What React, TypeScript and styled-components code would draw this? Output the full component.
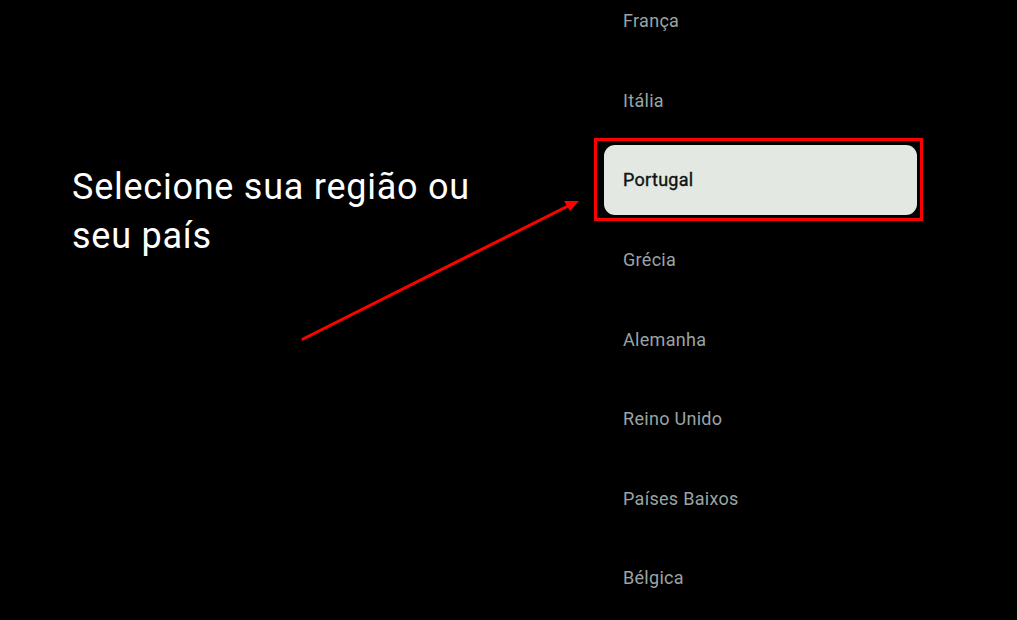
import React from "react";
import styled, { createGlobalStyle } from "styled-components";

const GlobalStyle = createGlobalStyle`
  html, body {
    margin: 0;
    padding: 0;
    background: #000;
  }
  body {
    font-family: Roboto, "Noto Sans", sans-serif;
  }
`;

const Screen = styled.div`
  position: relative;
  width: 1017px;
  height: 620px;
  overflow: hidden;
  background: #000;
  display: grid;
  grid-template-columns: 604px 313px 1fr;
`;

const Intro = styled.div`
  padding: 163px 0 0 72px;
`;

const Title = styled.h1`
  margin: 0;
  width: 430px;
  font-weight: 400;
  font-size: 36px;
  letter-spacing: 0.75px;
  line-height: 49px;
  color: #fff;
`;

const List = styled.ul`
  list-style: none;
  margin: -19px 0 0;
  padding: 0;
  display: flex;
  flex-direction: column;
`;

const Row = styled.li`
  height: 79.6px;
  display: flex;
  align-items: center;
`;

const Item = styled.div<{ $selected?: boolean }>`
  flex: 1;
  height: 70px;
  display: flex;
  align-items: center;
  padding-left: 19px;
  border-radius: 11px;
  font-size: 18px;
  letter-spacing: 0.3px;
  font-weight: 400;
  -webkit-text-stroke: ${(p) => (p.$selected ? "0.4px #101412" : "0")};
  color: ${(p) => (p.$selected ? "#101412" : "#9aa4a5")};
  background: ${(p) => (p.$selected ? "#e3e8e2" : "transparent")};
`;

const Highlight = styled.div`
  position: absolute;
  left: 594px;
  top: 138px;
  width: 323px;
  height: 77px;
  border: 3px solid #ff0000;
`;

const Arrow = styled.svg`
  position: absolute;
  inset: 0;
  pointer-events: none;
`;

const countries = [
  "França",
  "Itália",
  "Portugal",
  "Grécia",
  "Alemanha",
  "Reino Unido",
  "Países Baixos",
  "Bélgica",
];

export default function App() {
  return (
    <>
      <GlobalStyle />
      <Screen>
        <Intro>
          <Title>Selecione sua região ou seu país</Title>
        </Intro>
        <List>
          {countries.map((c) => (
            <Row key={c}>
              <Item $selected={c === "Portugal"}>{c}</Item>
            </Row>
          ))}
        </List>
        <Highlight />
        <Arrow width="1017" height="620" viewBox="0 0 1017 620">
          <line x1="303" y1="339" x2="568" y2="206" stroke="#f00" strokeWidth="3" strokeLinecap="round" />
          <polygon points="579,201 564,201 570,211" fill="#f00" />
        </Arrow>
      </Screen>
    </>
  );
}
